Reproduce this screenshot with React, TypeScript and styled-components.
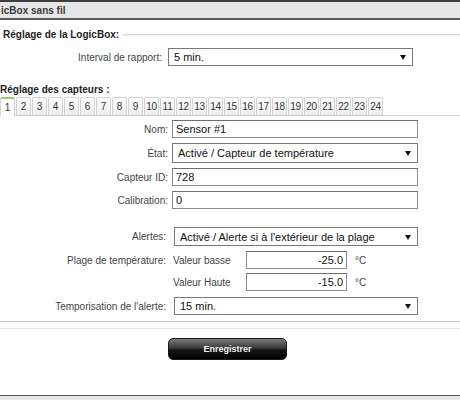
import React, { useState } from 'react';
import styled, { createGlobalStyle } from 'styled-components';

const GlobalStyle = createGlobalStyle`
  html, body {
    margin: 0;
    padding: 0;
    background: #fff;
  }
  body {
    font-family: 'Liberation Sans', Arial, sans-serif;
    font-size: 10px;
    color: #444;
  }
`;

const tabs = Array.from({ length: 24 }, (_, i) => i + 1);

export default function App() {
  const [active, setActive] = useState(1);

  return (
    <Page>
      <GlobalStyle />
      <Header>
        <HeaderTitle>icBox sans fil</HeaderTitle>
      </Header>

      <Legend>
        <LegendText>Réglage de la LogicBox:</LegendText>
        <LegendLine />
      </Legend>

      <Row $label={162} $field={245} $gap={6} $top={7}>
        <Label>Interval de rapport:</Label>
        <SelectWrap $height={18}>
          <Select defaultValue="5">
            <option value="5">5 min.</option>
            <option value="10">10 min.</option>
            <option value="15">15 min.</option>
          </Select>
        </SelectWrap>
      </Row>

      <SubTitle>Réglage des capteurs :</SubTitle>

      <TabBar>
        {tabs.map((n) => (
          <Tab key={n} $active={n === active} onClick={() => setActive(n)}>
            {n}
          </Tab>
        ))}
      </TabBar>

      <Row $label={168} $field={246} $gap={4} $top={4}>
        <Label>Nom:</Label>
        <TextInput defaultValue="Sensor #1" />
      </Row>
      <Row $label={168} $field={246} $gap={4} $top={5}>
        <Label>État:</Label>
        <SelectWrap $height={20}>
          <Select defaultValue="temp">
            <option value="temp">Activé / Capteur de température</option>
            <option value="off">Désactivé</option>
          </Select>
        </SelectWrap>
      </Row>
      <Row $label={168} $field={246} $gap={4} $top={5}>
        <Label>Capteur ID:</Label>
        <TextInput defaultValue="728" />
      </Row>
      <Row $label={168} $field={246} $gap={4} $top={5}>
        <Label>Calibration:</Label>
        <TextInput defaultValue="0" />
      </Row>

      <Row $label={166} $field={244} $gap={8} $top={18}>
        <Label>Alertes:</Label>
        <SelectWrap $height={19}>
          <Select defaultValue="out">
            <option value="out">Activé / Alerte si à l'extérieur de la plage</option>
            <option value="off">Désactivé</option>
          </Select>
        </SelectWrap>
      </Row>

      <Row $label={166} $field={244} $gap={7} $top={5}>
        <Label>Plage de température:</Label>
        <ValueLine>
          <ValueName>Valeur basse</ValueName>
          <ValueInput defaultValue="-25.0" />
          <Unit>°C</Unit>
        </ValueLine>
      </Row>
      <Row $label={166} $field={244} $gap={7} $top={4}>
        <span />
        <ValueLine>
          <ValueName>Valeur Haute</ValueName>
          <ValueInput defaultValue="-15.0" />
          <Unit>°C</Unit>
        </ValueLine>
      </Row>

      <Row $label={166} $field={244} $gap={8} $top={6}>
        <Label>Temporisation de l'alerte:</Label>
        <SelectWrap $height={18}>
          <Select defaultValue="15">
            <option value="5">5 min.</option>
            <option value="15">15 min.</option>
            <option value="30">30 min.</option>
          </Select>
        </SelectWrap>
      </Row>

      <Divider />

      <SaveButton type="button">Enregistrer</SaveButton>

      <Footer />
    </Page>
  );
}

const Page = styled.div`
  width: 460px;
  height: 400px;
  overflow: hidden;
  display: flex;
  flex-direction: column;
`;

const Header = styled.div`
  height: 16px;
  border-top: 2px solid #3e3e3e;
  border-bottom: 2px solid #5a5a5a;
  background: #e6e6e6;
  display: flex;
  align-items: center;
`;

const HeaderTitle = styled.span`
  margin-left: 1px;
  font-size: 10px;
  font-weight: bold;
  color: #3a3a3a;
  white-space: nowrap;
`;

const Legend = styled.div`
  margin-top: 9px;
  height: 12px;
  display: flex;
  align-items: center;
  padding-left: 3px;
`;

const LegendText = styled.span`
  font-weight: bold;
  color: #222;
  line-height: 12px;
  white-space: nowrap;
`;

const LegendLine = styled.div`
  flex: 1;
  margin-left: 4px;
  height: 0;
  border-top: 1px solid #d6d6d6;
  border-bottom: 1px solid #f0f0f0;
`;

const Row = styled.div<{ $label: number; $field: number; $gap: number; $top: number }>`
  display: grid;
  grid-template-columns: ${(p) => p.$label}px ${(p) => p.$field}px;
  column-gap: ${(p) => p.$gap}px;
  align-items: center;
  margin-top: ${(p) => p.$top}px;
`;

const Label = styled.label`
  text-align: right;
  color: #444;
  white-space: nowrap;
`;

const fieldText = `
  font-family: 'Liberation Sans', Arial, sans-serif;
  font-size: 11px;
  color: #111;
`;

const TextInput = styled.input`
  ${fieldText}
  box-sizing: border-box;
  width: 100%;
  height: 18px;
  padding: 0 3px;
  border: 1px solid #8a8a8a;
  border-top-color: #6f6f6f;
  outline: none;
`;

const SelectWrap = styled.div<{ $height: number }>`
  position: relative;
  height: ${(p) => p.$height}px;

  &::after {
    content: '';
    position: absolute;
    right: 7px;
    top: 50%;
    margin-top: -2px;
    border-left: 3px solid transparent;
    border-right: 3px solid transparent;
    border-top: 5px solid #111;
    pointer-events: none;
  }
`;

const Select = styled.select`
  ${fieldText}
  appearance: none;
  box-sizing: border-box;
  width: 100%;
  height: 100%;
  padding: 0 16px 0 5px;
  border: 1px solid #7a7a7a;
  border-radius: 0;
  background: #fff;
  outline: none;
`;

const SubTitle = styled.div`
  margin-top: 18px;
  line-height: 12px;
  font-weight: bold;
  color: #222;
`;

const TabBar = styled.div`
  margin-top: 1px;
  display: flex;
  gap: 1px;
  border-bottom: 1px solid #cfcfcf;
`;

const Tab = styled.div<{ $active: boolean }>`
  box-sizing: border-box;
  width: 15px;
  height: 19px;
  margin-bottom: -1px;
  display: flex;
  align-items: center;
  justify-content: center;
  font-size: 10px;
  color: #333;
  letter-spacing: -0.3px;
  border: 1px solid #d2d2d2;
  border-top: ${(p) => (p.$active ? '2px solid #9ccc65' : '1px solid #d2d2d2')};
  border-bottom-color: ${(p) => (p.$active ? '#fff' : '#cfcfcf')};
  border-radius: 2px 2px 0 0;
  background: ${(p) => (p.$active ? '#fff' : 'linear-gradient(#ffffff, #ececec)')};
  cursor: pointer;
`;

const ValueLine = styled.div`
  display: flex;
  align-items: center;
`;

const ValueName = styled.span`
  width: 73px;
  color: #444;
  white-space: nowrap;
`;

const ValueInput = styled(TextInput)`
  width: 101px;
  text-align: right;
`;

const Unit = styled.span`
  margin-left: 8px;
  color: #444;
`;

const Divider = styled.div`
  margin-top: 6px;
  height: 6px;
  border-top: 1px solid #cacaca;
  border-bottom: 1px solid #e2e2e2;
`;

const SaveButton = styled.button`
  align-self: flex-start;
  margin: 9px 0 0 168px;
  width: 119px;
  height: 22px;
  padding: 0;
  border: 1px solid #1a1a1a;
  border-radius: 5px;
  background: linear-gradient(#7a7a7a 0%, #3a3a3a 45%, #151515 55%, #000 100%);
  color: #f2f2f2;
  font-family: 'Liberation Sans', Arial, sans-serif;
  font-size: 9px;
  font-weight: bold;
  cursor: pointer;
`;

const Footer = styled.div`
  margin-top: auto;
  height: 4px;
  border-top: 1px solid #555;
  background: #e6e6e6;
`;
